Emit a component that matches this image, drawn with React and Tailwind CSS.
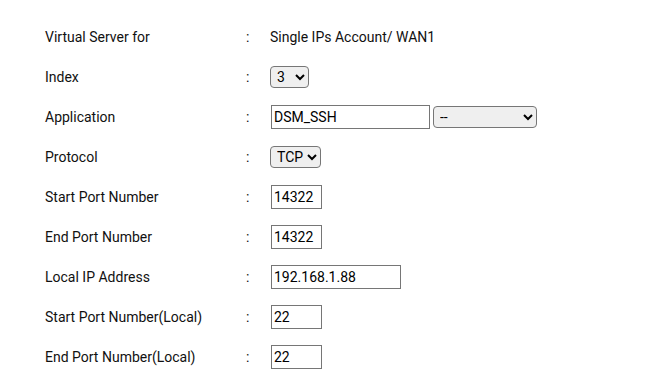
import React from 'react';

const Row = ({ label, children }) => (
  <>
    <div className="flex h-10 items-center">{label}</div>
    <div className="flex h-10 items-center">:</div>
    <div className="flex h-10 items-center">{children}</div>
  </>
);

const selectCls =
  'h-[22px] rounded-[4px] border border-[#767676] bg-[#efefef] pl-[2px] text-[14px] text-black';
const inputCls = 'ml-px h-[24px] border border-[#767676] bg-white px-[2px] text-[14px] text-black';

export default function App() {
  return (
    <div className="min-h-screen bg-white font-['Roboto',sans-serif] text-[14px] text-[#111]">
      <div className="grid grid-cols-[201px_24px_1fr] pt-[17px] pl-[45px]">
        <Row label="Virtual Server for">
          <span>Single IPs Account/ WAN1</span>
        </Row>
        <Row label="Index">
          <select className={`${selectCls} w-[39px]`} defaultValue="3">
            <option>1</option>
            <option>2</option>
            <option>3</option>
          </select>
        </Row>
        <Row label="Application">
          <input className={`${inputCls} w-[159px]`} defaultValue="DSM_SSH" />
          <select className={`${selectCls} ml-[3px] w-[104px]`} defaultValue="--">
            <option>--</option>
            <option>DSM_SSH</option>
          </select>
        </Row>
        <Row label="Protocol">
          <select className={`${selectCls} w-[51px]`} defaultValue="TCP">
            <option>TCP</option>
            <option>UDP</option>
          </select>
        </Row>
        <Row label="Start Port Number">
          <input className={`${inputCls} w-[51px]`} defaultValue="14322" />
        </Row>
        <Row label="End Port Number">
          <input className={`${inputCls} w-[51px]`} defaultValue="14322" />
        </Row>
        <Row label="Local IP Address">
          <input className={`${inputCls} w-[130px]`} defaultValue="192.168.1.88" />
        </Row>
        <Row label="Start Port Number(Local)">
          <input className={`${inputCls} w-[51px]`} defaultValue="22" />
        </Row>
        <Row label="End Port Number(Local)">
          <input className={`${inputCls} w-[51px]`} defaultValue="22" />
        </Row>
      </div>
    </div>
  );
}
